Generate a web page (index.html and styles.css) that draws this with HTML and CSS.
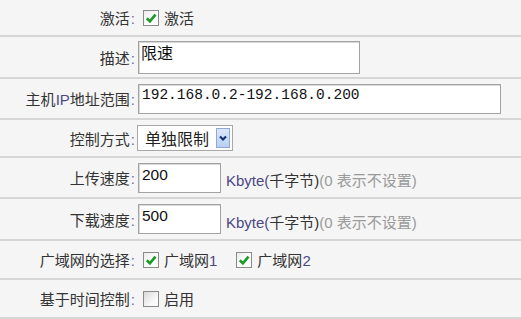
FILE: index.html
```html
<!DOCTYPE html>
<html lang="zh-CN">
<head>
    <meta charset="UTF-8">
    <title>带宽控制</title>
    <link rel="stylesheet" href="styles.css">
</head>
<body>
    <div class="rule-form">
        <div class="row row-35">
            <span class="lbl">激活<i class="colon">:</i></span>
            <div class="field">
                <span class="cb checked"><svg viewBox="0 0 10 10"><path d="M2 5.2 L4.2 7.4 L8.2 2.6"/></svg></span>
                <span class="opt">激活</span>
            </div>
        </div>
        <div class="row row-40">
            <span class="lbl">描述<i class="colon">:</i></span>
            <div class="field">
                <textarea class="txt desc" rows="1">限速</textarea>
            </div>
        </div>
        <div class="row row-39">
            <span class="lbl">主机<b class="en">IP</b>地址范围<i class="colon">:</i></span>
            <div class="field">
                <input class="txt ip" type="text" value="192.168.0.2-192.168.0.200">
            </div>
        </div>
        <div class="row row-36">
            <span class="lbl">控制方式<i class="colon">:</i></span>
            <div class="field">
                <div class="select">
                    <span class="select-val">单独限制</span>
                    <span class="select-btn"><svg viewBox="0 0 10 10"><path d="M2.5 3.8 L5 6.3 L7.5 3.8"/></svg></span>
                </div>
            </div>
        </div>
        <div class="row row-39">
            <span class="lbl">上传速度<i class="colon">:</i></span>
            <div class="field">
                <input class="txt speed" type="text" value="200">
                <span class="unit"><b class="en">Kbyte(</b>千字节)<span class="hint">(0 表示不设置)</span></span>
            </div>
        </div>
        <div class="row row-40">
            <span class="lbl">下载速度<i class="colon">:</i></span>
            <div class="field">
                <input class="txt speed" type="text" value="500">
                <span class="unit"><b class="en">Kbyte(</b>千字节)<span class="hint">(0 表示不设置)</span></span>
            </div>
        </div>
        <div class="row row-37">
            <span class="lbl">广域网的选择<i class="colon">:</i></span>
            <div class="field">
                <span class="cb checked"><svg viewBox="0 0 10 10"><path d="M2 5.2 L4.2 7.4 L8.2 2.6"/></svg></span>
                <span class="opt">广域网<b class="en">1</b></span>
                <span class="cb checked"><svg viewBox="0 0 10 10"><path d="M2 5.2 L4.2 7.4 L8.2 2.6"/></svg></span>
                <span class="opt">广域网<b class="en">2</b></span>
            </div>
        </div>
        <div class="row row-37">
            <span class="lbl">基于时间控制<i class="colon">:</i></span>
            <div class="field">
                <span class="cb"></span>
                <span class="opt">启用</span>
            </div>
        </div>
    </div>
</body>
</html>
```

FILE: styles.css
```css
* {
    margin: 0;
    padding: 0;
    box-sizing: border-box;
}

body {
    background: #f5f5f5;
    font-family: "Liberation Sans", "Noto Sans CJK SC", sans-serif;
    font-size: 15px;
    color: #333;
}

.rule-form {
    width: 521px;
}

.row {
    display: flex;
    align-items: center;
    border-bottom: 2px solid #d6d6d6;
}

.row-35 { height: 37px; }
.row-36 { height: 38px; }
.row-37 { height: 39px; }
.row-39 { height: 41px; }
.row-40 { height: 42px; }

.lbl {
    flex: none;
    width: 135px;
    text-align: right;
    white-space: nowrap;
}

.colon {
    font-style: normal;
    color: #6b68a8;
    margin-left: 1px;
}

.en {
    font-weight: normal;
    color: #4d4785;
}

.field {
    display: flex;
    align-items: center;
    padding-left: 3px;
}

.txt {
    display: block;
    background: #fff;
    border: 1px solid #a3a3a3;
    box-shadow: inset 1px 1px 0 #d8d8d8;
    color: #111;
    outline: none;
}

.desc {
    width: 222px;
    height: 33px;
    padding: 1px 2px;
    resize: none;
    overflow: hidden;
    font-family: "Noto Sans CJK SC", sans-serif;
    font-size: 16px;
    line-height: 18px;
}

.ip {
    width: 363px;
    height: 30px;
    padding: 0 3px 7px;
    font-family: "Liberation Mono", monospace;
    font-size: 14.5px;
}

.speed {
    width: 83px;
    height: 30px;
    padding: 0 3px 6px;
    font-family: "Liberation Sans", sans-serif;
    font-size: 15.5px;
}

.unit {
    margin-left: 5px;
    margin-top: 4px;
    white-space: nowrap;
}

.hint {
    color: #9a9a9a;
}

.select {
    display: flex;
    align-items: center;
    width: 96px;
    height: 26px;
    margin-left: -1px;
    background: #fff;
    border: 1px solid #a8a8a8;
}

.select-val {
    flex: 1;
    padding-left: 7px;
    font-family: "Noto Sans CJK SC", sans-serif;
    font-size: 16px;
    color: #222;
}

.select-btn {
    width: 14px;
    height: 20px;
    margin-right: 2px;
    background: linear-gradient(#dbe8fb, #b9cff2);
    border: 1px solid #8fa9d6;
}

.select-btn svg {
    display: block;
    width: 12px;
    height: 18px;
    fill: none;
    stroke: #16307a;
    stroke-width: 1.8;
}

.cb {
    flex: none;
    width: 16px;
    height: 16px;
    margin-left: 5px;
    border: 1px solid #8a8a8a;
    background: linear-gradient(135deg, #d9d9d9, #fafafa 70%);
}

.cb.checked {
    background: linear-gradient(135deg, #ececec, #fff 60%);
}

.cb svg {
    display: block;
    width: 14px;
    height: 14px;
    fill: none;
    stroke: #1a9a26;
    stroke-width: 1.9;
}

.opt {
    margin-left: 5px;
    margin-right: 14px;
}
```
